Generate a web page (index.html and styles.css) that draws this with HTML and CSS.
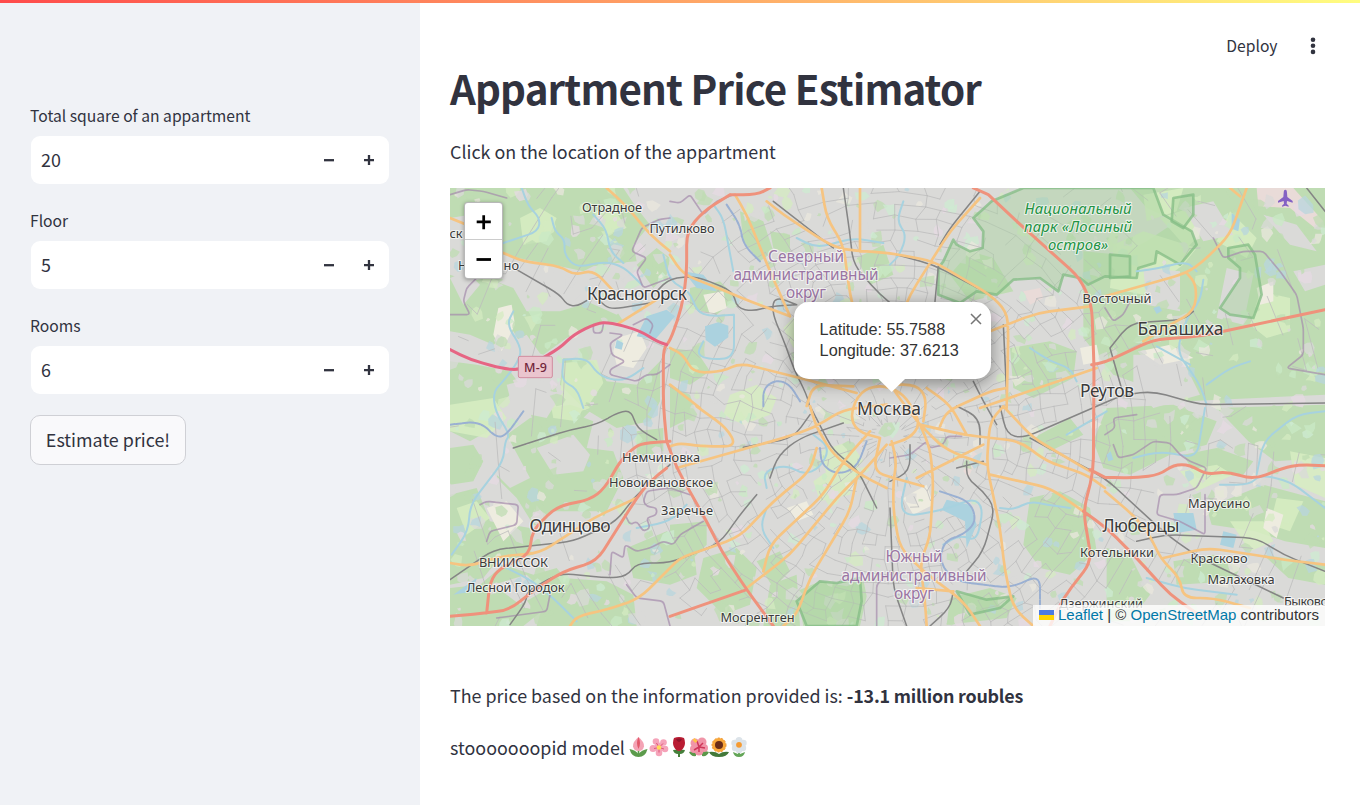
FILE: index.html
```html
<!DOCTYPE html>
<html lang="en">
<head>
<meta charset="utf-8">
<title>Appartment Price Estimator</title>
<link rel="stylesheet" href="styles.css">
</head>
<body>
<div class="decoration"></div>
<div class="app">
  <aside class="sidebar">
    <div class="field">
      <label class="field-label">Total square of an appartment</label>
      <div class="number"><span class="value">20</span>
        <svg class="step" viewBox="0 0 40 48"><path d="M15 24.2h10"/></svg><svg class="step" viewBox="0 0 40 48"><path d="M15 24.2h10M20 19v10"/></svg></div>
    </div>
    <div class="field">
      <label class="field-label">Floor</label>
      <div class="number"><span class="value">5</span>
        <svg class="step" viewBox="0 0 40 48"><path d="M15 24.2h10"/></svg><svg class="step" viewBox="0 0 40 48"><path d="M15 24.2h10M20 19v10"/></svg></div>
    </div>
    <div class="field">
      <label class="field-label">Rooms</label>
      <div class="number"><span class="value">6</span>
        <svg class="step" viewBox="0 0 40 48"><path d="M15 24.2h10"/></svg><svg class="step" viewBox="0 0 40 48"><path d="M15 24.2h10M20 19v10"/></svg></div>
    </div>
    <button class="submit">Estimate price!</button>
  </aside>
  <main class="main">
    <header class="toolbar">
      <span class="deploy">Deploy</span>
      <svg class="kebab" viewBox="0 0 6 18"><circle cx="3" cy="2.700" r="2.300"/><circle cx="3" cy="8.700" r="2.300"/><circle cx="3" cy="14.900" r="2.300"/></svg>
    </header>
    <h1 class="title">Appartment Price Estimator</h1>
    <p class="hint">Click on the location of the appartment</p>
    <div class="map">
      <svg class="tiles" viewBox="0 0 2625 1314">
        <rect class="urban" width="2625" height="1314"/>
        <!-- woodland and fields -->
        <g class="wood">
          <path d="M0 0H520L560 60 600 110 550 170 560 220 500 225 430 235 400 250 330 235 230 215 160 200 130 130 60 80 0 90zM0 260L60 280 110 270 190 300 230 370 330 370 430 340 500 370 520 400 430 410 350 450 280 500 220 480 190 430 130 470 60 440 0 430zM0 520L80 530 180 550 210 590 140 660 130 720 60 760 0 730zM340 510L430 520 470 580 560 590 630 520V640L600 700 500 720 400 660 330 590z"/>
          <path d="M560 230L620 180 660 210 650 260 610 300zM720 300L810 280 860 330 800 380 720 360zM660 480L740 490 780 550 720 590 660 570zM660 590L720 620 740 680 660 720zM870 70L940 100 970 190 930 220 880 160zM960 130L1020 140 1020 200 970 180z"/>
          <path d="M170 740L240 690 350 670 430 700 410 780 490 790 520 870 460 990 340 1020 250 1010 200 930 140 870zM240 670L360 650 420 670 360 730 260 740zM0 780L70 770 100 820 70 880 0 890zM0 920L80 900 120 1000 240 1020 250 1100 140 1120 100 1170 0 1190zM0 1200L90 1190 160 1130 250 1160 320 1140 360 1190 300 1250 220 1314H0zM560 730L640 720V790L560 810zM530 1080L650 1030 730 1070 740 1160 660 1190 550 1170zM340 1170L470 1180 550 1220 560 1314H260L280 1244zM660 1010L770 1000V1070L710 1130 660 1120z"/>
          <path d="M760 1110L860 1080 920 1140 900 1250 820 1280 740 1200zM920 1120L990 1090 1020 1150 970 1200zM960 1190L1040 1160 1050 1314H940zM1040 1210L1110 1180 1190 1195 1240 1175 1250 1225 1230 1314H1060zM1500 1230L1620 1200 1700 1230 1670 1290 1490 1310z"/>
          <path d="M1900 190L2010 200 2090 160 2180 100 2090 60 2040 0H2625V620L2210 640 1990 560 1900 450z"/>
          <path d="M1680 480L1800 460 1880 490 1870 570 1750 630 1690 600zM1500 260L1560 190 1630 210 1690 310 1560 340zM1220 210L1300 170 1330 260 1260 290zM1740 930L1830 910 1920 960 1940 1090 1860 1160 1770 1140 1720 1070zM1750 750L1860 690 1900 740 1800 790zM1930 760L1970 660 2170 650 2300 700 2270 770 2160 800 2040 860 1960 840zM2200 800L2300 780 2410 820 2380 860 2240 870zM2300 660L2625 650V810L2475 820 2395 760z"/>
          <path d="M2270 960L2440 890 2625 940V1080L2505 1060 2415 1030 2285 1010zM1970 1080L2040 1100 2100 1220 2040 1300H1970zM2170 1120L2290 1100 2370 1140 2350 1180 2180 1190zM2440 1100L2625 1130V1190L2515 1170z"/>
        </g>
        <g class="meadow">
          <path d="M210 90L270 60 320 90 290 160 220 170zM340 525L440 515 460 585 420 645 330 625zM430 70L490 60 530 120 470 140zM290 600L380 620 420 660 330 690 270 630zM0 650L130 630 170 690 110 750 0 730zM300 640H410L380 700 310 690zM20 960L80 940 120 990 50 1040zM1990 170L2080 130 2240 180 2200 230 2080 320 1980 300zM2080 20L2200 0 2180 70 2090 100zM2340 70L2420 150 2390 210 2300 160zM2430 310L2520 330V430L2450 450 2400 410zM2130 90L2220 60 2280 110 2210 180zM2520 790L2625 810V930L2535 890zM2190 850L2300 830 2350 860 2240 910zM2340 1000H2440L2470 1060 2400 1090zM2480 930L2560 940 2520 1030 2460 1010z"/>
          <path d="M840 620L920 590 980 630 960 680 880 710 820 680zM1000 420L1060 360 1080 420 1030 480zM1090 880L1160 830 1230 840 1200 920 1110 940zM1110 790L1200 760 1240 820 1190 870 1130 860z"/>
        </g>
        <g class="grey">
          <path d="M230 240L340 260 410 300 360 350 280 310 230 290zM410 250H500L560 330 500 380 410 340zM0 270L50 250 90 290 40 350zM170 590L260 570 340 610 290 690 190 670zM170 470L230 440 280 510 250 530zM120 750L170 740 240 870 180 900 120 840zM260 780L370 740 420 800 400 850 310 860zM300 970H440L540 1040 480 1120H330L240 1090zM130 1190L230 1160 280 1210 210 1250zM2080 240L2190 250V370L2090 350zM2200 60L2290 40 2350 140 2260 160zM2330 240L2410 260 2380 410 2300 390zM2050 500H2190L2250 620 2110 660 2050 600zM2440 80L2540 110 2600 190 2520 170zM2530 250L2625 230V290L2565 310z"/>
        </g>
        <g class="sand"><path d="M145 360L185 350 195 410 155 490 130 440zM500 450L570 430 590 480 550 540 500 530 490 490zM110 960L170 940 220 1000 160 1060zM760 320L820 310 830 360 780 380zM1360 930L1430 890 1450 950 1390 980zM2420 300L2470 280V340L2430 350zM1890 480L1940 470 1950 520 1900 530zM2450 960L2500 980 2480 1050 2440 1020zM2070 490L2160 470 2230 510 2130 530zM1010 960L1070 940 1090 980 1040 1000z"/></g>
        <g class="aero"><path d="M2420 0H2530L2620 100 2595 120 2520 60 2425 55z"/><path d="M1720 310L1770 300 1780 330 1740 350zM1540 850L1570 790 1585 800 1555 870z"/></g>
        <g class="streets" id="streets"></g>
        <!-- national park -->
        <g class="park">
          <path d="M1625 40L1570 90 1600 130 1598 180 1560 190 1520 170 1510 155 1480 220 1465 240V320L1530 345 1580 310 1640 320 1690 275 1770 270 1825 310 1840 260 1890 270 1915 290 1965 265 2060 270 2065 240 2115 225 2120 190 2190 230 2240 170 2225 130 2140 80 2110 0H1720z"/>
          <path d="M2335 180L2395 170 2415 200 2435 320 2410 390 2340 380 2310 360 2370 270 2370 240 2335 210z"/>
          <path d="M1980 200L2040 205V265L1980 270z"/>
          <path d="M2170 30L2230 20 2230 80 2200 120 2165 100z"/>
          <path d="M1520 1210L1610 1235 1690 1225 1650 1260 1560 1280zM1070 1314L1040 1240 1110 1180 1160 1185 1230 1170 1235 1240 1220 1314z"/>
        </g>
        <g class="lake">
          <path d="M560 445L590 385 650 365 675 385 615 455zM765 415L805 403 835 413V448L795 476 767 456zM500 455L520 465 515 485 495 480zM2345 75L2370 95 2365 130 2345 122zM2170 975H2230L2240 1025 2180 1035zM1490 935L1560 950 1580 1010 1550 1080 1545 1000 1475 965zM1970 800L1982 790 1990 815 1975 820zM2110 360L2128 354 2136 368 2120 378zM2320 1030L2360 1040 2350 1080 2310 1070zM10 1220L80 1170 70 1210zM700 250L760 260 800 310 740 300z"/>
        </g>
        <g class="water">
          <path d="M215 0L235 55 270 90 265 130 205 150 160 165M305 90L315 130 345 155 342 200 380 240 460 220 520 235 575 290M430 80L470 125 480 190 520 225M190 370L170 410 215 480 205 520 160 580 130 610 135 670 180 740 165 760 160 820 60 950 55 1030 5 1100M340 515L410 510 440 555 480 575 530 575 580 540M340 515L335 580 380 600 400 660M640 200L660 280 720 310 740 370 780 385 850 380M852 380L852 510 780 515 740 500 760 460M850 250L820 90 790 50"/>
          <path d="M950 900L940 850 1010 830 1060 860 1110 840 1140 780 1090 740M950 960L930 1020 970 1080M1370 870L1350 960 1380 985 1500 960 1570 930 1600 960 1580 1060 1530 1040 1480 1070M1650 960L1690 965 1740 940 1790 950 1860 960M1040 150L1100 180 1210 150 1300 165M1360 40L1340 100 1370 140 1350 200 1320 230M1850 740L1970 670M1740 480L1800 520 1860 540 1880 580M2260 275L2250 340 2210 390 2180 490 2250 590 2270 650M2270 590L2340 540 2400 520M2060 250L2130 240 2210 220 2240 250M2050 810L2130 790 2240 810 2265 660M2420 860L2440 760 2540 680 2625 670M2310 890L2400 890 2430 860 2520 880 2625 960M150 1130L250 1180 310 1230 380 1300M560 1020L660 1000 710 950M2090 1170L2200 1200 2360 1220M2120 475L2220 530"/>
        </g>
        <g class="bound">
          <path d="M660 270L580 300 560 250 590 210 545 190 575 120 625 95 660 90M480 435L520 440 480 465 485 500 525 520 480 545 480 560 560 580 590 560 620 560 660 530M430 410L430 435 455 435 460 410M550 410L590 390 610 410 600 435M660 40L690 45 720 20 760 80 800 40 850 20M0 380L60 380 40 340 50 300 80 270M0 20L50 5 100 10 170 30M90 950L110 940 205 950 200 1010 120 1030 110 1060"/>
          <path d="M525 980L540 1010 560 1000 580 1030 600 1020 590 990 620 980 620 960 590 955 580 940 590 910 620 905 660 900 720 920M480 1160L485 1090 520 1110 525 1070 560 1090 600 1080 640 1060 670 1070 690 1040 760 1000M530 1190L560 1230 640 1240 660 1314M140 1290L290 1270 300 1220M1320 810L1380 800 1430 760 1440 780 1480 770 1490 745 1535 745M1990 770L2005 810 2050 800 2110 760 2160 765 2190 800 2220 820 2270 840 2240 900 2180 920 2130 920 2120 980 2190 1000 2265 1040 2265 920M1965 740L1995 720 1990 690 2060 680M2290 150L2320 210 2380 190 2440 190 2490 250 2540 320 2560 420 2560 500 2510 540 2625 560M2040 340L2020 380 1990 400 1965 360M1320 1150L1280 1190 1280 1314"/>
        </g>
        <g class="river"><path d="M830 50L870 110 880 170 930 220M0 710L90 700 140 750 170 740 220 670M1470 910L1560 940 1580 1000 1540 1040 1480 1060 1470 1130 1520 1180 1680 1200 1770 1160 1770 1260M940 655L940 600 980 575 1020 590 1050 640M1110 780L1115 830 1160 860 1220 840 1250 760"/></g>
        <g class="rail">
          <path d="M200 245L330 320 350 350 380 355 410 338M450 340L480 365 600 345M620 310L660 270 740 265 850 310 860 360 910 370 960 355 1040 350M1040 350L975 325 965 370 1010 480 1030 540 1070 620 1080 660M970 40L1150 180M1180 0L1200 140 1210 230 1290 320 1340 360M1470 170L1500 120 1590 10M1340 200L1450 230 1620 320M1465 235L1455 340M1660 410L1670 620M1570 580L1600 640 1640 710"/>
          <path d="M190 780L360 725 440 710 510 670 545 670 560 720 620 755M0 1175L130 1085 370 1060 500 1000 550 930 660 830M180 1310L230 1240 230 1210 330 1155 470 1170 530 1165 560 1125 660 1125 810 1065 870 980 920 920M960 870L985 800 1050 750 1180 705M880 778L1030 750 1080 680"/>
          <path d="M1080 654L1150 790 1220 840 1280 960M1520 654L1590 690 1590 770M1520 840L1600 820M1650 654L1670 740 1720 750 2020 620 2110 610 2250 650 2625 645M1740 750L1965 870 2150 1040 2250 1110 2500 1230M2060 1060L2150 1040 2420 1050 2500 1100 2625 1150M1980 480L2040 405 2200 395 2230 370M1980 480L2020 620M1550 820L1550 870 1600 910 1635 960 1600 1090 1550 1150M1320 960L1330 1200 1370 1314M1380 770L1380 850 1320 880M1440 1314L1500 1260 1510 1210M2570 0L2625 70"/>
        </g>
        <g class="orange">
          <path d="M470 0L530 55 600 140 660 190M0 90L50 110M160 195L220 220 330 235 375 262 430 245 500 320M500 410L620 335M660 200L700 260 780 290 900 340 1020 385M855 20L890 80 960 250 1020 385M950 40L1000 80 1130 165 1180 185 1320 195 1450 220 1620 320 1670 370 1675 430 1670 660M1115 0L1130 90 1180 170 1200 320 1220 400M1230 0L1230 190M1590 30L1500 130 1380 320 1330 440M660 480L700 500 730 555 820 550 870 525 1070 575 1220 615M660 590L750 660M1620 430L1760 375 1920 355M1590 660L1940 540M1965 325L2210 255 2260 220 2340 140 2390 0M2210 255L2240 290 2235 370 2160 410 2080 460M2340 0L2370 25"/>
          <path d="M0 1125L60 1135 150 1105 270 1095 430 990 560 930M740 655L830 720 860 775 750 775 690 765 660 775M680 840L1000 750 1090 720 1180 665 1310 650M1100 780L1080 850 970 940 870 1045 790 1075 690 1110 660 1140M360 1314L380 1285 490 1260 570 1230 660 1140M940 1150L960 1070 1120 920 1180 820 1260 730M890 1200L1020 1100 1160 930 1240 850 1310 770M1220 870L1200 970 1080 1170 1040 1280 1000 1314M1080 654L1100 720 1150 800 1230 860 1310 900"/>
          <path d="M1320 770L1380 750 1410 710 1390 660 1350 610 1290 590 1230 610 1200 680 1220 730 1290 750M1310 590L1400 590 1430 630 1420 700M1410 710L1540 740 1710 760 1790 820 1910 860 1965 900M1410 710L1480 780 1550 810 1610 830M1410 710L1340 620 1290 540M1470 715L1490 670 1620 610 1670 600M1550 740L1500 650 1430 600M1400 870L1460 840 1600 770M1660 655L1750 750 1920 850M1660 655L1620 700 1610 830 1650 1020 1665 1150 1690 1260 1750 1314M1620 860L1800 900 1900 970M1410 710L1440 780 1450 880 1440 1050 1410 1120 1425 1240 1430 1314M1325 760L1340 820 1330 880 1330 970 1350 1080 1420 1150 1540 1240 1590 1314M1290 750L1270 850 1330 870 1420 895M1400 1200L1510 1210"/>
          <path d="M1965 910L2060 990 2105 1050 2130 1110 2190 1170 2200 1230 2290 1230 2400 1260M2140 1110L2270 1080 2380 1095 2500 1115 2625 1130M1070 654L1090 590 1210 595"/>
        </g>
        <g class="trunk">
          <path d="M840 20L760 70 710 130 710 260 695 360 660 460 640 480 640 654 650 760M840 20L920 20 960 0M1615 20L1700 100 1890 270 1925 350 1932 530 1930 850 1900 970 1925 1120 1840 1230 1800 1314M1615 20L1570 0M1925 530L1965 523 2110 455 2250 445 2625 365M0 1285L110 1275 180 1265 240 1215 340 1150 440 1120 560 930 600 880 650 840M110 1275L120 1180 150 1140 240 1100 245 1030 320 955 420 935 465 900 510 820 550 780 580 765 660 760M650 760L680 840 770 1000 815 1090 890 1205 970 1314M890 1205L790 1240 660 1285M1965 868L2060 870 2130 860 2170 830 2220 830 2270 860 2330 850 2410 875 2500 840 2550 830 2625 833M1900 970L1970 1020 2060 1110 2160 1220 2260 1290M1920 845L1965 868"/>
        </g>
        <path class="motorway" d="M0 485L60 515 160 542 210 546 260 520 330 480 370 440 440 405 480 403 570 428 620 460 650 470"/>
        <rect class="shield" x="205" y="505" width="102" height="64" rx="5"/>
        <path class="plane" d="M2506 5q5 0 5 10l1 12 16 12v5l-17-5-1 8 6 6v3l-10-3-10 3v-3l6-6-1-8-17 5v-5l16-12 1-12q0-10 5-10z"/>
        <g class="labels" transform="scale(3) translate(-450 -188)">
          <g class="small">
            <text x="612" y="212" textLength="60">Отрадное</text><text x="682" y="233" textLength="65">Путилково</text><text x="456" y="238">ск</text><text x="488.500" y="270" textLength="61">Нахабино</text>
            <text x="1117" y="303" textLength="69">Восточный</text><text x="661" y="462" textLength="78">Немчиновка</text><text x="661" y="487" textLength="104">Новоивановское</text><text x="687" y="515" textLength="52">Заречье</text><text x="513.500" y="567" textLength="69">ВНИИССОК</text><text x="515.500" y="592" textLength="98">Лесной Городок</text><text x="1219" y="508" textLength="62">Марусино</text><text x="1117" y="557" textLength="74">Котельники</text><text x="1219" y="563" textLength="57">Красково</text><text x="1241" y="584" textLength="67">Малаховка</text><text x="1101" y="608" textLength="84">Дзержинский</text><text x="757.500" y="622" textLength="74">Мосрентген</text><text x="1306" y="606" textLength="44">Быково</text>
          </g>
          <g class="big">
            <text x="637" y="300" textLength="100">Красногорск</text><text x="1180.500" y="335" textLength="86">Балашиха</text><text x="1107" y="397" textLength="54">Реутов</text><text x="889" y="415" textLength="64">Москва</text><text x="570" y="532" textLength="81">Одинцово</text><text x="1141" y="532" textLength="77">Люберцы</text>
          </g>
          <g class="okrug">
            <text x="806" y="262" textLength="76">Северный</text><text x="806" y="280" textLength="145">административный</text><text x="806" y="298" textLength="40">округ</text>
            <text x="914" y="562" textLength="57">Южный</text><text x="914" y="581" textLength="145">административный</text><text x="914" y="599" textLength="40">округ</text>
          </g>
          <g class="reserve">
            <text x="1078" y="214" textLength="107">Национальный</text><text x="1078" y="232" textLength="108">парк «Лосиный</text><text x="1078" y="250" textLength="60">остров»</text>
          </g>
          <text class="ref" x="535.500" y="372" textLength="23">М-9</text>
        </g>
      </svg>
      <div class="zoom">
        <svg class="zoom-btn" viewBox="0 0 37 37"><path d="M11.500 19.500h14.500M18.700 12.500v14.500"/></svg>
        <svg class="zoom-btn" viewBox="0 0 37 37"><path d="M11.500 19.500h14.500"/></svg>
      </div>
      <div class="popup">
        <div class="popup-body">Latitude: 55.7588<br>Longitude: 37.6213</div>
        <svg class="close" viewBox="0 0 12 12"><path d="M1 1l10 10M11 1L1 11"/></svg>
        <svg class="tip" viewBox="0 0 30 13"><path d="M1.500 0L14.700 13 28 0z"/></svg>
      </div>
      <div class="attribution">
        <svg class="flag" viewBox="0 0 15 10"><path class="flag-top" d="M0 0h15v5H0z"/><path class="flag-low" d="M0 5h15v5H0z"/></svg>
        <span><a>Leaflet</a> | © <a>OpenStreetMap</a> contributors</span>
      </div>
    </div>
    <p class="result">The price based on the information provided is: <strong>-13.1 million roubles</strong></p>
    <p class="model"><span>stooooooopid model</span>
      <span class="flowers">
        <svg viewBox="0 0 20 20"><path fill="#5c9b4c" d="M.5 12q6 1 9 5 3-4 9-5-2 8-9 8T.5 12z"/><path fill="#5c9b4c" d="M8.700 13h1.600v6H8.700z"/><path fill="#f4a4b5" d="M9.500 0q6 5 5.500 9.500-1 4.500-5.500 4.500T4 9.500Q3.500 5 9.500 0z"/><path fill="#e2596b" d="M9.500 0q3 6 0 12-3-6 0-12z"/></svg>
        <svg viewBox="0 0 20 20"><g fill="#f5a3b9"><circle cx="7" cy="4.500" r="3.300"/><circle cx="14.500" cy="5.500" r="3.300"/><circle cx="16" cy="12" r="3.300"/><circle cx="10" cy="16" r="3.300"/><circle cx="4" cy="11.500" r="3.500"/><circle cx="10" cy="10" r="4.500"/></g><path stroke="#dd5676" d="M10 10.500L7.500 6M10 10.500l4-4M10 10.500l5 1.500M10 10.500v5M10 10.500l-5 1"/><circle cx="10" cy="10.500" r="2.300" fill="#ffdd58"/></svg>
        <svg viewBox="0 0 20 20"><path fill="#46803b" d="M4 13q4-1 6 1 2-2 6-1-1 4-5 4v3H9v-3q-4 0-5-4z"/><path fill="#b91d33" d="M5 1q5-2 10 0 2 5 0 9-2 4-5 4t-5-4Q3 6 5 1z"/><path fill="#91152b" d="M7 2q3-1 6 0-1 3-3 3T7 2z"/></svg>
        <svg viewBox="0 0 20 20"><path fill="#5b984a" d="M0 15l7-2v6q-5 1-7-4zM20 15l-7-2v6q5 1 7-4z"/><g fill="#f095a8"><circle cx="6" cy="6" r="4.500"/><circle cx="13" cy="5" r="4.500"/><circle cx="15" cy="11" r="4"/><circle cx="10" cy="14" r="4.500"/><circle cx="5" cy="12" r="4"/></g><path stroke="#cf3759" stroke-width="1.500" d="M10 10L8 4M10 10l4-4M10 10l6 1M10 10v5M10 10l-5 3"/><path stroke="#ffc34a" stroke-width="3" d="M4.500 2l3 3"/></svg>
        <svg viewBox="0 0 20 20"><path fill="#43793a" d="M0 15q6-1 10 2 4-3 10-2-2 5-10 5T0 15z"/><circle cx="10" cy="8" r="7" fill="#faa83a" stroke="#f0982f" stroke-dasharray="2 1.500"/><circle cx="10" cy="8" r="4" fill="#6b2d18"/></svg>
        <svg viewBox="0 0 20 20"><path fill="#63a557" d="M4 15l5 2v-4h2v4l5-2q-1 5-6 5t-6-5z"/><g fill="#dce3e9"><circle cx="10" cy="3.500" r="3.500"/><circle cx="14.500" cy="6" r="3.200"/><circle cx="14" cy="11" r="3.200"/><circle cx="10" cy="13" r="3.200"/><circle cx="6" cy="11" r="3.200"/><circle cx="5.500" cy="6" r="3.200"/></g><circle cx="10" cy="7.800" r="2.900" fill="#f69b32"/></svg>
      </span>
    </p>
  </main>
</div>
<script src="streets.js"></script>
</body>
</html>
```
FILE: styles.css
```css
* { box-sizing: border-box; }
body { margin: 0; height: 805px; overflow: hidden; background: #fff; color: #31333f; font-family: "Noto Sans CJK SC", "Noto Sans", sans-serif; font-size: 17.9px; line-height: 32px; }
.decoration { position: absolute; top: 0; left: 0; width: 100%; height: 3px; background: linear-gradient(90deg, #ff4b4b, #fffd80); }
.app { display: flex; height: 805px; }
.sidebar { width: 420px; padding: 103px 30px 0; background: #f0f2f6; }
.field { height: 105px; }
.field-label { display: block; height: 33px; font-size: 15.67px; line-height: 26px; }
.number { display: flex; align-items: center; height: 48px; margin: 0 1px; border-radius: 9px; background: #fff; padding-left: 10px; }
.value { flex: 1; padding-bottom: 2px; }
.step { width: 40px; height: 48px; fill: none; stroke: #31333f; stroke-width: 2.3; }
.submit { display: block; margin-top: -3px; width: 156px; height: 50px; padding: 0 0 2px; border: 1px solid #cfd0d5; border-radius: 10px; background: #f9f9fb; color: inherit; font: inherit; white-space: nowrap; }
.main { width: 940px; padding: 30px 35px 0 30px; }
.toolbar { display: flex; justify-content: flex-end; align-items: center; height: 32px; padding-right: 9.5px; font-size: 15.67px; gap: 32px; }
.kebab { width: 6px; height: 18px; fill: #31333f; }
.title { margin: 0; height: 58px; line-height: 52px; font-size: 40.3px; font-weight: 600; letter-spacing: -0.84px; white-space: nowrap; }
.hint, .result, .model { margin: 0; height: 32px; white-space: nowrap; }
.hint { margin: 15px 0 21px; }
.result strong { letter-spacing: -0.22px; }
.map { position: relative; width: 875px; height: 438px; overflow: hidden; font-family: "Liberation Sans", Arial, sans-serif; }
.tiles { display: block; width: 875px; height: 438px; }
.tiles path { stroke-linejoin: round; stroke-linecap: round; }
.urban { fill: #dadad8; }
.wood { fill: #bfdcb3; }
.meadow { fill: #d7edc2; opacity: .85; }
.grey { fill: #dadad8; }
.sand { fill: #eeece0; }
.aero { fill: #e9dbd8; }
.streets { fill: none; stroke: #bcbcbc; stroke-width: 2.4; }
.streets .lot { stroke: none; opacity: .75; }
.park { fill: #a9d3a0; fill-opacity: .45; stroke: #83bc84; stroke-width: 8; stroke-opacity: .75; }
.lake { fill: #abd2df; }
.water { fill: none; stroke: #a7d2df; stroke-width: 6; }
.bound { fill: none; stroke: #a58bac; stroke-width: 5; opacity: .7; }
.river { fill: none; stroke: #9ab0d2; stroke-width: 6; stroke-dasharray: 15 4; }
.rail { fill: none; stroke: #858585; stroke-width: 4.6; }
.orange { fill: none; stroke: #f6c481; stroke-width: 8; }
.trunk { fill: none; stroke: #ef927c; stroke-width: 9; }
.motorway { fill: none; stroke: #e66583; stroke-width: 9; }
.shield { fill: #eac5ce; stroke: #d18c9f; stroke-width: 3; }
.plane { fill: #8461c4; }
.labels { font-family: "Noto Sans", sans-serif; text-anchor: middle; fill: #3b3b3b; stroke: #fff; stroke-opacity: .65; stroke-width: 2.2px; paint-order: stroke; stroke-linejoin: round; }
.small { font-size: 12.8px; }
.big { font-size: 17.4px; }
.okrug { font-size: 15.4px; fill: #9a75a3; }
.reserve { font-size: 14.9px; font-style: italic; fill: #239344; }
.ref { font-size: 12.5px; fill: #72253a; stroke: none; font-weight: 500; }
.zoom { position: absolute; left: 14px; top: 14px; width: 39px; height: 77px; border: 1px solid rgba(0,0,0,.28); border-radius: 4px; background: #fff; box-shadow: 0 1px 4px rgba(0,0,0,.35); }
.zoom-btn { display: block; width: 37px; height: 37px; fill: none; stroke: #000; stroke-width: 2.8; }
.zoom-btn:first-child { border-bottom: 1px solid #ccc; }
.popup { position: absolute; left: 344px; top: 114px; width: 197px; height: 77px; border-radius: 15px; background: #fff; box-shadow: 0 4px 17px rgba(0,0,0,.4); }
.popup-body { padding: 17px 0 0 25.6px; font-size: 16.25px; line-height: 21.1px; color: #333; white-space: nowrap; }
.close { position: absolute; right: 9px; top: 11px; width: 12px; height: 12px; fill: none; stroke: #757575; stroke-width: 1.5; }
.tip { position: absolute; left: 83px; top: 76.5px; width: 30px; height: 13px; fill: #fff; }
.attribution { position: absolute; right: 0; bottom: 0; display: flex; align-items: center; width: 292px; height: 21px; padding: 0 0 2px 6px; gap: 4px; background: rgba(255,255,255,.8); color: #333; font-size: 15px; line-height: 19px; white-space: nowrap; }
.attribution a { color: #0078a8; }
.flag { width: 15px; height: 10px; }
.flag-top { fill: #4c7be1; }
.flag-low { fill: #ffd500; }
.result { margin: 53px 0 20px; }
.model { display: flex; align-items: center; gap: 4px; }
.flowers { display: flex; }
.flowers svg { width: 20px; height: 20px; fill: none; }
```
FILE: streets.js
```js
// Fills the built-up area with minor streets and small lots from a fixed seed.
(function () {
  var seed = 41;
  function rnd() { seed = (seed * 16807) % 2147483647; return seed / 2147483647; }
  var cx = 1320, cy = 745, out = '', lines = '';
  var fills = ['#bfdcb3', '#bfdcb3', '#c9e9c6', '#cdebd2', '#e9e7dd', '#d4ebc2', '#d9d9d8', '#d9d9d8', '#b8d6dd', '#e5dae3'];
  for (var i = 0; i < 1100; i++) {
    var x = rnd() * 2625, y = rnd() * 1314, s = 5 + rnd() * 20, p = '';
    for (var k = 0; k < 7; k++) {
      var a = k * Math.PI / 3.5, r = s * (0.4 + rnd() * 0.9);
      p += (k ? 'L' : 'M') + (x + r * Math.cos(a)).toFixed(1) + ' ' + (y + r * Math.sin(a)).toFixed(1);
    }
    out += '<path class="lot" fill="' + fills[Math.floor(rnd() * fills.length)] + '" d="' + p + 'z"/>';
  }
  function node(ring, spoke) {
    var j = Math.sin(ring * 12.9 + spoke * 78.2) * 43758.5; j -= Math.floor(j);
    var q = Math.sin(ring * 39.3 + spoke * 11.1) * 24634.6; q -= Math.floor(q);
    var r = 40 + ring * 36 + q * 16, a = (spoke + j * 0.5) * Math.PI * 2 / 64;
    return [cx + r * Math.cos(a) * 1.05, cy + r * Math.sin(a)];
  }
  function seg(a, b) { lines += 'M' + a[0].toFixed(1) + ' ' + a[1].toFixed(1) + 'L' + b[0].toFixed(1) + ' ' + b[1].toFixed(1); }
  for (var g = 0; g < 34; g++) {
    for (var t = 0; t < 64; t++) {
      var n = node(g, t), edge = g > 19 ? 0.2 : 0.68;
      if (rnd() < edge && (g > 6 || t % 2 === 0)) seg(n, node(g + 1, t));
      if (rnd() < edge && (g > 6 || t % 3 === 0)) seg(n, node(g, (t + 1) % 64));
    }
  }
  document.getElementById('streets').innerHTML = out + '<path d="' + lines + '"/>';

  // Rounds the bends of the line work so roads and rivers run as curves.
  function round(points, limit) {
    var d = 'M' + points[0].join(' ');
    for (var i = 1; i < points.length - 1; i++) {
      var p = points[i], e = [points[i - 1], points[i + 1]].map(function (o) {
        var dx = o[0] - p[0], dy = o[1] - p[1], len = Math.hypot(dx, dy) || 1, c = Math.min(limit, len / 2);
        return (p[0] + dx * c / len).toFixed(1) + ' ' + (p[1] + dy * c / len).toFixed(1);
      });
      d += 'L' + e[0] + 'Q' + p.join(' ') + ' ' + e[1];
    }
    return d + 'L' + points[points.length - 1].join(' ');
  }
  document.querySelectorAll('.water path,.orange path,.trunk path,.rail path,.river path,.bound path,.motorway').forEach(function (el) {
    var limit = el.parentNode.classList.contains('bound') ? 10 : 40;
    el.setAttribute('d', el.getAttribute('d').split('M').slice(1).map(function (part) {
      var v = part.match(/[\d.]+/g).map(Number), pts = [];
      for (var i = 0; i + 1 < v.length; i += 2) pts.push([v[i], v[i + 1]]);
      return round(pts, limit);
    }).join(''));
  });
})();
```
